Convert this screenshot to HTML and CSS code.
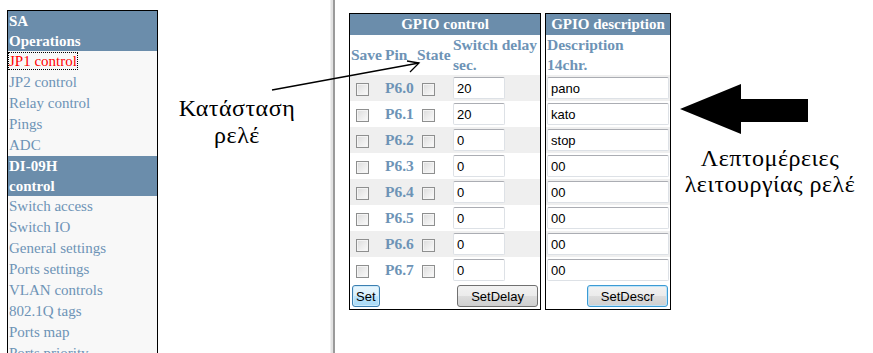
FILE: index.html
```html
<!DOCTYPE html>
<html lang="el">
<head>
    <meta charset="UTF-8">
    <meta name="viewport" content="width=device-width, initial-scale=1.0">
    <title>GPIO control</title>
    <link rel="stylesheet" href="styles.css">
</head>
<body>
    <div class="page">
        <div class="nav-frame">
            <div class="menu">
                <div class="menu-head">SA<br>Operations</div>
                <a class="menu-item"><span class="active">JP1 control</span></a>
                <a class="menu-item">JP2 control</a>
                <a class="menu-item">Relay control</a>
                <a class="menu-item">Pings</a>
                <a class="menu-item">ADC</a>
                <div class="menu-head">DI-09H<br>control</div>
                <a class="menu-item">Switch access</a>
                <a class="menu-item">Switch IO</a>
                <a class="menu-item">General settings</a>
                <a class="menu-item">Ports settings</a>
                <a class="menu-item">VLAN controls</a>
                <a class="menu-item">802.1Q tags</a>
                <a class="menu-item">Ports map</a>
                <a class="menu-item">Ports priority</a>
            </div>
        </div>

        <div class="frame-split"></div>

        <div class="main-frame">
            <table class="panel gpio">
                <colgroup>
                    <col class="c-save">
                    <col class="c-pin">
                    <col class="c-state">
                    <col class="c-delay">
                </colgroup>
                <tr><th class="cap" colspan="4">GPIO control</th></tr>
                <tr class="colhead">
                    <th>Save</th>
                    <th>Pin</th>
                    <th>State</th>
                    <th>Switch delay<br>sec.</th>
                </tr>
                <tr class="alt">
                    <td><input type="checkbox"></td>
                    <td class="pin">P6.0</td>
                    <td><input type="checkbox"></td>
                    <td><input class="delay" type="text" value="20"></td>
                </tr>
                <tr>
                    <td><input type="checkbox"></td>
                    <td class="pin">P6.1</td>
                    <td><input type="checkbox"></td>
                    <td><input class="delay" type="text" value="20"></td>
                </tr>
                <tr class="alt">
                    <td><input type="checkbox"></td>
                    <td class="pin">P6.2</td>
                    <td><input type="checkbox"></td>
                    <td><input class="delay" type="text" value="0"></td>
                </tr>
                <tr>
                    <td><input type="checkbox"></td>
                    <td class="pin">P6.3</td>
                    <td><input type="checkbox"></td>
                    <td><input class="delay" type="text" value="0"></td>
                </tr>
                <tr class="alt">
                    <td><input type="checkbox"></td>
                    <td class="pin">P6.4</td>
                    <td><input type="checkbox"></td>
                    <td><input class="delay" type="text" value="0"></td>
                </tr>
                <tr>
                    <td><input type="checkbox"></td>
                    <td class="pin">P6.5</td>
                    <td><input type="checkbox"></td>
                    <td><input class="delay" type="text" value="0"></td>
                </tr>
                <tr class="alt">
                    <td><input type="checkbox"></td>
                    <td class="pin">P6.6</td>
                    <td><input type="checkbox"></td>
                    <td><input class="delay" type="text" value="0"></td>
                </tr>
                <tr>
                    <td><input type="checkbox"></td>
                    <td class="pin">P6.7</td>
                    <td><input type="checkbox"></td>
                    <td><input class="delay" type="text" value="0"></td>
                </tr>
                <tr>
                    <td><button class="btn btn-focus btn-set">Set</button></td>
                    <td colspan="2"></td>
                    <td class="right"><button class="btn btn-wide">SetDelay</button></td>
                </tr>
            </table>

            <table class="panel descr">
                <tr><th class="cap">GPIO description</th></tr>
                <tr class="colhead"><th>Description<br>14chr.</th></tr>
                <tr class="alt"><td><input class="text" type="text" value="pano"></td></tr>
                <tr><td><input class="text" type="text" value="kato"></td></tr>
                <tr class="alt"><td><input class="text" type="text" value="stop"></td></tr>
                <tr><td><input class="text" type="text" value="00"></td></tr>
                <tr class="alt"><td><input class="text" type="text" value="00"></td></tr>
                <tr><td><input class="text" type="text" value="00"></td></tr>
                <tr class="alt"><td><input class="text" type="text" value="00"></td></tr>
                <tr><td><input class="text" type="text" value="00"></td></tr>
                <tr><td class="right"><button class="btn btn-wide btn-hover">SetDescr</button></td></tr>
            </table>
        </div>
    </div>

    <!-- annotations drawn over the screenshot -->
    <div class="note note-state">Κατάσταση<br>ρελέ</div>
    <div class="note note-descr">Λεπτομέρειες<br>λειτουργίας ρελέ</div>
    <svg class="callouts" width="873" height="353" viewBox="0 0 873 353">
        <path d="M272 90 L419 63" stroke="#000" stroke-width="1.3" fill="none"/>
        <path d="M407 61 L419 63 L410 72" stroke="#000" stroke-width="1.3" fill="none"/>
        <polygon points="680,109 741,84 741,99 808,99 808,122 741,122 741,134" fill="#000"/>
    </svg>
</body>
</html>
```

FILE: styles.css
```css
body {
    margin: 0;
    background: #fff;
    font-family: "Liberation Serif", "Times New Roman", serif;
}
.page {
    display: flex;
    height: 353px;
    overflow: hidden;
}

/* left frame */
.nav-frame {
    width: 330px;
    flex: none;
    padding: 10px 0 0 7px;
    box-sizing: border-box;
}
.menu {
    width: 151px;
    box-sizing: border-box;
    border: 1px solid #000;
    background: #f8f8f8;
    font-size: 15px;
}
.menu-head {
    background: #6b8dab;
    color: #fff;
    font-weight: bold;
    line-height: 20px;
    padding-left: 1px;
}
.menu-item {
    display: block;
    color: #6d93b6;
    line-height: 21px;
    padding-left: 1px;
    white-space: nowrap;
}
.menu-item .active {
    color: #f00;
    outline: 1px dotted #000;
}

.frame-split {
    width: 2px;
    flex: none;
    background: #e2e2e2;
    border-left: 1px solid #f0f0f0;
    border-right: 2px solid #9a9a9a;
}

/* right frame */
.main-frame {
    display: flex;
    align-items: flex-start;
    gap: 4px;
    padding: 13px 0 0 14px;
}
.panel {
    border: 1px solid #000;
    border-collapse: separate;
    border-spacing: 0;
    table-layout: fixed;
    background: #fff;
    font-size: 15px;
}
.gpio {
    width: 192px;
}
.descr {
    width: 126px;
}
.c-save { width: 34px; }
.c-pin { width: 32px; }
.c-state { width: 36px; }
.c-delay { width: 88px; }

.panel th.cap {
    background: #6b8dab;
    color: #fff;
    height: 21px;
    padding: 0;
    text-align: center;
    white-space: nowrap;
}
.colhead th {
    color: #6d93b6;
    font-size: 15.5px;
    height: 40px;
    line-height: 20px;
    padding: 0 0 0 1px;
    text-align: left;
    white-space: nowrap;
    vertical-align: middle;
}
.panel td {
    height: 26px;
    padding: 0 0 0 1px;
    vertical-align: middle;
}
.panel tr.alt td {
    background: #efefef;
}
.panel td.right {
    text-align: right;
    padding-right: 2px;
}
.pin {
    color: #6d93b6;
    font-weight: bold;
    font-size: 15.5px;
}

input[type="checkbox"] {
    -webkit-appearance: none;
    appearance: none;
    width: 13px;
    height: 13px;
    margin: 0 0 0 5px;
    vertical-align: middle;
    border: 1px solid #8e8f8f;
    background: linear-gradient(135deg, #dcdcdc, #fbfbfb);
    box-shadow: inset 0 0 0 1px #f4f4f4;
    box-sizing: border-box;
}
input[type="text"] {
    height: 22px;
    box-sizing: border-box;
    margin: 0;
    padding: 0 3px;
    border: 1px solid #dde1e6;
    border-top-color: #abadb3;
    border-radius: 2px;
    background: #fff;
    font-family: "Liberation Sans", Arial, sans-serif;
    font-size: 13px;
    color: #000;
    vertical-align: middle;
}
input.delay {
    width: 52px;
}
input.text {
    width: 122px;
}

.btn {
    height: 22px;
    padding: 0 3px;
    margin: 0;
    border: 1px solid #707070;
    border-radius: 3px;
    background: linear-gradient(#f2f2f2 0%, #ebebeb 50%, #dddddd 51%, #cfcfcf 100%);
    font-family: "Liberation Sans", Arial, sans-serif;
    font-size: 13px;
    color: #000;
    vertical-align: middle;
}
.btn-set {
    margin-left: 1px;
}
.btn-wide {
    width: 81px;
}
.btn-focus {
    border-color: #3c7fb1;
    background: linear-gradient(#eaf6fd 0%, #d9f0fc 50%, #bee6fd 51%, #a7d9f5 100%);
    box-shadow: inset 0 0 0 1px #cdeaf9;
}
.btn-hover {
    border-color: #3c9bd4;
    box-shadow: inset 0 0 0 1px #bfe3f7;
}

/* annotations */
.note {
    position: absolute;
    text-align: center;
    font-family: "Liberation Serif", "DejaVu Serif", serif;
    font-size: 24px;
    letter-spacing: 0.5px;
    color: #000;
}
.note-state {
    left: 157px;
    top: 95px;
    width: 160px;
    line-height: 27px;
}
.note-descr {
    left: 668px;
    top: 145px;
    width: 204px;
    line-height: 26px;
}
.callouts {
    position: absolute;
    left: 0;
    top: 0;
    pointer-events: none;
}
```
